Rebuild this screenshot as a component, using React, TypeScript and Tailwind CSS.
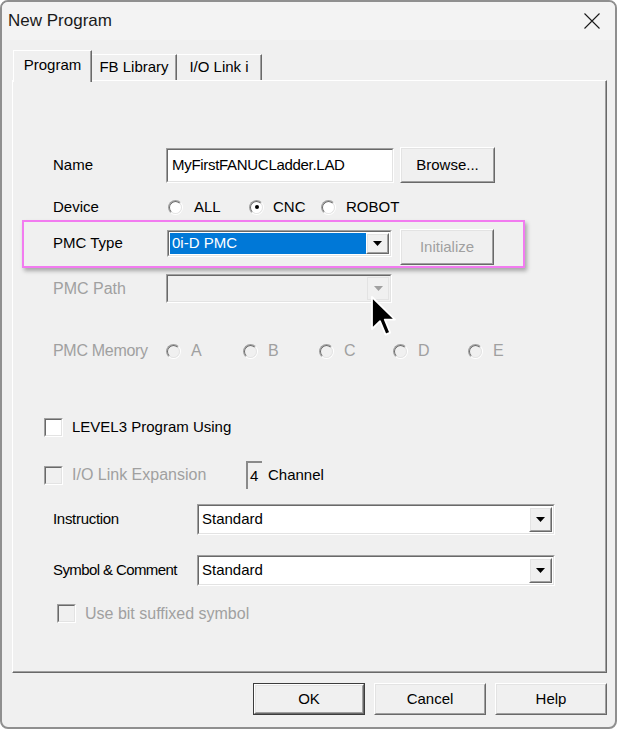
import type React from "react";

// classic win32 3D edges
const Sunken = ({ className = "", inner = "bg-white", children }: { className?: string; inner?: string; children?: React.ReactNode }) => (
  <div className={`border border-t-[#a0a0a0] border-l-[#a0a0a0] border-r-white border-b-white ${className}`}>
    <div className={`h-full w-full border border-t-[#696969] border-l-[#696969] border-r-[#e3e3e3] border-b-[#e3e3e3] ${inner}`}>
      {children}
    </div>
  </div>
);

const Raised = ({ className = "", children }: { className?: string; children?: React.ReactNode }) => (
  <div className={`border border-t-white border-l-white border-r-[#696969] border-b-[#696969] bg-[#f0f0f0] ${className}`}>
    <div className="flex h-full w-full items-center justify-center border border-t-[#e3e3e3] border-l-[#e3e3e3] border-r-[#a0a0a0] border-b-[#a0a0a0]">
      {children}
    </div>
  </div>
);

const Arrow = ({ color = "#000" }: { color?: string }) => (
  <svg width="9" height="5" viewBox="0 0 9 5">
    <polygon points="0,0 9,0 4.5,5" fill={color} />
  </svg>
);

const Combo = ({
  className = "",
  value,
  selected = false,
  disabled = false,
}: {
  className?: string;
  value?: string;
  selected?: boolean;
  disabled?: boolean;
}) => (
  <Sunken className={className} inner={disabled ? "bg-[#f0f0f0]" : "bg-white"}>
    <div className="flex h-full items-stretch p-[1px]">
      <div className="flex flex-1 items-center">
        {value && (
          <div
            className={`flex h-full w-full items-center px-[2px] ${selected ? "bg-[#0078d7] text-white" : "text-black"}`}
          >
            {value}
          </div>
        )}
      </div>
      {disabled ? (
        <div className="flex w-[22px] items-center justify-center border border-[#e3e3e3]">
          <Arrow color="#a0a0a0" />
        </div>
      ) : (
        <Raised className="w-[23px]">
          <Arrow />
        </Raised>
      )}
    </div>
  </Sunken>
);

const Radio = ({ checked = false, disabled = false }: { checked?: boolean; disabled?: boolean }) => (
  <div className="h-[15px] w-[15px] shrink-0 rounded-full border border-t-[#a0a0a0] border-l-[#a0a0a0] border-r-white border-b-white">
    <div
      className={`flex h-full w-full items-center justify-center rounded-full border border-t-[#696969] border-l-[#696969] border-r-[#e3e3e3] border-b-[#e3e3e3] ${disabled ? "bg-[#f0f0f0]" : "bg-white"}`}
    >
      {checked && <div className="h-[4px] w-[4px] rounded-full bg-black" />}
    </div>
  </div>
);

const Check = ({ disabled = false }: { disabled?: boolean }) => (
  <Sunken className="h-[19px] w-[19px] shrink-0" inner={disabled ? "bg-[#f0f0f0]" : "bg-white"} />
);

const Button = ({ label, className = "", isDefault = false }: { label: string; className?: string; isDefault?: boolean }) => (
  <div className={`${isDefault ? "border border-[#3c3c3c]" : ""} ${className}`}>
    <Raised className="h-full w-full">
      <span>{label}</span>
    </Raised>
  </div>
);

const App = () => {
  return (
    <div className="relative h-[729px] w-[617px] bg-white font-['Liberation_Sans',Arial,sans-serif] text-[15px] text-black">
      <div className="flex h-full w-full flex-col overflow-hidden rounded-[8px] border-2 border-[#8f8f8f] bg-[#f0f0f0]">
        {/* Title bar */}
        <div className="flex h-[38px] shrink-0 items-center justify-between bg-[#f3f3f3] pl-[6px] pr-[15px]">
          <span className="text-[17px] text-[#1a1a1a]">New Program</span>
          <svg width="16" height="16" viewBox="0 0 16 16">
            <path d="M0.5 0.5 L15.5 15.5 M15.5 0.5 L0.5 15.5" stroke="#1a1a1a" strokeWidth="1.1" />
          </svg>
        </div>

        {/* Body */}
        <div className="flex flex-1 flex-col pl-[10px] pr-[8px] pt-[10px]">
          {/* Tabs */}
          <div className="ml-[1px] flex h-[30px] items-end">
            <div className="relative z-10 -mb-[2px] flex h-[32px] w-[79px] items-center justify-center border-l border-t border-r border-l-white border-t-white border-r-[#696969] bg-[#f0f0f0] pb-[3px] shadow-[inset_-1px_0_0_#a0a0a0]">
              Program
            </div>
            <div className="flex h-[26px] w-[85px] items-center justify-center border-t border-r border-t-white border-r-[#696969] shadow-[inset_-1px_0_0_#a0a0a0]">
              FB Library
            </div>
            <div className="flex h-[26px] w-[85px] items-center justify-center border-t border-r border-t-white border-r-[#696969] shadow-[inset_-1px_0_0_#a0a0a0]">
              I/O Link i
            </div>
          </div>

          {/* Tab panel */}
          <div className="flex h-[593px] w-[595px] flex-col border border-t-white border-l-white border-r-[#696969] border-b-[#696969] shadow-[inset_-1px_-1px_0_#a0a0a0]">
            {/* Name */}
            <div className="mt-[66px] flex h-[36px] items-center pl-[40px]">
              <span className="w-[113px]">Name</span>
              <Sunken className="h-[35px] w-[228px]">
                <div className="flex h-full items-center px-[4px] tracking-[-0.3px]">MyFirstFANUCLadder.LAD</div>
              </Sunken>
              <Button label="Browse..." className="ml-[6px] h-[36px] w-[95px]" />
            </div>

            {/* Device */}
            <div className="mt-[13px] flex h-[22px] items-center pl-[40px]">
              <span className="w-[115px]">Device</span>
              <div className="flex w-[81px] items-center gap-[11px]">
                <Radio />
                <span>ALL</span>
              </div>
              <div className="flex w-[72px] items-center gap-[9px]">
                <Radio checked />
                <span>CNC</span>
              </div>
              <div className="flex items-center gap-[10px]">
                <Radio />
                <span>ROBOT</span>
              </div>
            </div>

            {/* PMC Type (highlighted) */}
            <div className="ml-[9px] mt-[2px] flex h-[48px] w-[503px] items-start border-2 border-[#f27bf0] pl-[29px] pt-[7px] shadow-[2px_3px_4px_rgba(0,0,0,0.3)]">
              <span className="mt-[1px] flex h-[27px] w-[114px] items-center">PMC Type</span>
              <Combo className="mt-[1px] h-[27px] w-[225px]" value="0i-D PMC" selected />
              <Button label="Initialize" className="ml-[8px] h-[36px] w-[94px] text-[#a0a0a0]" />
            </div>

            {/* PMC Path */}
            <div className="mt-[6px] flex h-[29px] items-center pl-[40px] text-[16px] text-[#a0a0a0]">
              <span className="w-[113px]">PMC Path</span>
              <Combo className="h-[29px] w-[226px]" disabled />
            </div>

            {/* PMC Memory */}
            <div className="mt-[38px] flex h-[20px] items-center pl-[40px] text-[16px] text-[#a0a0a0]">
              <span className="w-[113px] tracking-[-0.3px]">PMC Memory</span>
              {["A", "B", "C", "D", "E"].map((m, i) => (
                <div
                  key={m}
                  className={`flex items-center gap-[10px] ${["w-[77px]", "w-[76px]", "w-[74px]", "w-[75px]", ""][i]}`}
                >
                  <Radio disabled />
                  <span>{m}</span>
                </div>
              ))}
            </div>

            {/* LEVEL3 */}
            <div className="mt-[57px] flex h-[18px] items-center gap-[9px] pl-[31px]">
              <Check />
              <span>LEVEL3 Program Using</span>
            </div>

            {/* I/O Link Expansion */}
            <div className="mt-[25px] flex h-[28px] items-center pl-[31px]">
              <Check disabled />
              <span className="ml-[9px] w-[174px] text-[16px] text-[#a0a0a0]">I/O Link Expansion</span>
              <div className="flex h-[28px] w-[16px] items-center border-l-2 border-t-2 border-l-[#8a8a8a] border-t-[#8a8a8a] pl-[2px]">
                4
              </div>
              <span className="ml-[6px]">Channel</span>
            </div>

            {/* Instruction */}
            <div className="mt-[15px] flex h-[31px] items-center pl-[40px]">
              <span className="w-[144px] tracking-[-0.3px]">Instruction</span>
              <Combo className="h-[31px] w-[358px]" value="Standard" />
            </div>

            {/* Symbol & Comment */}
            <div className="mt-[20px] flex h-[31px] items-center pl-[40px]">
              <span className="w-[144px] tracking-[-0.6px]">Symbol &amp; Comment</span>
              <Combo className="h-[31px] w-[358px]" value="Standard" />
            </div>

            {/* Use bit suffixed symbol */}
            <div className="mt-[18px] flex h-[19px] items-center gap-[9px] pl-[44px] text-[16px] text-[#a0a0a0]">
              <Check disabled />
              <span>Use bit suffixed symbol</span>
            </div>
          </div>

          {/* Dialog buttons */}
          <div className="mt-[10px] flex justify-end gap-[9px]">
            <Button label="OK" className="h-[32px] w-[112px]" isDefault />
            <Button label="Cancel" className="h-[32px] w-[112px]" />
            <Button label="Help" className="h-[32px] w-[112px]" />
          </div>
        </div>
      </div>

      {/* mouse pointer */}
      <svg className="absolute left-[371px] top-[296px]" width="26" height="42" viewBox="0 0 13 21">
        <path d="M0.5 0.5 L0.5 16.5 L4.5 12.6 L7.3 19.3 L9.6 18.3 L6.9 11.8 L12 11.8 Z" fill="#000" stroke="#fff" strokeWidth="0.9" strokeLinejoin="round" />
      </svg>
    </div>
  );
};

export default App;
